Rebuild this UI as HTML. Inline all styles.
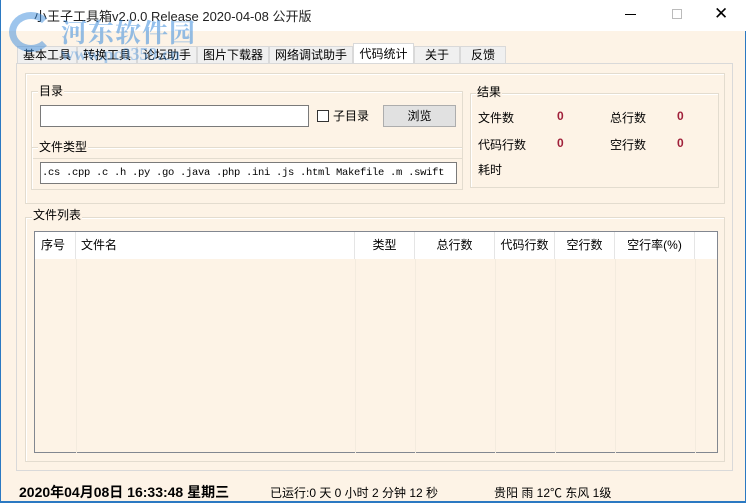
<!DOCTYPE html>
<html><head><meta charset="utf-8"><style>
*{box-sizing:border-box;margin:0;padding:0}
body{width:746px;height:503px;background:#fdf3e6;font-family:"Liberation Sans","Noto Sans CJK SC",sans-serif;font-size:12px;color:#000;position:relative;overflow:hidden;border-left:1px solid #2b79c2;border-right:1px solid #2b79c2}
.a{position:absolute}
.title{left:0;top:0;width:746px;height:31px;background:#fff}
.tab{position:absolute;top:46px;height:18px;background:#f0f0f0;border:1px solid #d9d9d9;border-bottom:none;font-size:12px;line-height:17px;text-align:center}
.grp{position:absolute;border:1px solid #e3dccf;box-shadow:inset 1px 1px 0 #fff}
.lbl{position:absolute;background:#fdf3e6;padding:0 1px;line-height:14px}
.inp{position:absolute;background:#fff;border:1px solid #7a7a7a}
.th{position:absolute;top:0;height:27px;line-height:27px;border-right:1px solid #e5e5e5}
.red{color:#a0203a;font-weight:bold}
</style></head><body>
<div class="a title"></div>
<div class="a" style="left:33px;top:6px;font-size:13px;color:#222">小王子工具箱v2.0.0 Release 2020-04-08 公开版</div>
<div class="a" style="left:624px;top:14px;width:11px;height:1px;background:#000"></div>
<div class="a" style="left:671px;top:9px;width:10px;height:10px;border:1px solid #bbb"></div>
<div class="a" style="left:713px;top:4px;font-size:17px;line-height:20px">✕</div>

<div class="tab" style="left:16px;width:60px">基本工具</div>
<div class="tab" style="left:76px;width:60px">转换工具</div>
<div class="tab" style="left:136px;width:60px">论坛助手</div>
<div class="tab" style="left:196px;width:72px">图片下载器</div>
<div class="tab" style="left:268px;width:84px">网络调试助手</div>
<div class="tab" style="left:352px;width:61px;top:43px;height:21px;background:#fff;line-height:20px">代码统计</div>
<div class="tab" style="left:413px;width:46px">关于</div>
<div class="tab" style="left:459px;width:46px">反馈</div>

<div class="a" style="left:60px;top:13px;font-size:26px;font-weight:bold;color:rgba(60,140,220,.55);font-family:'Noto Serif CJK SC',serif;letter-spacing:1px">河东软件园</div>
<div class="a" style="left:8px;top:12px;width:44px;height:40px;border-radius:50%;border:7px solid rgba(60,140,220,.5);border-right-color:transparent"></div>
<div class="a" style="left:60px;top:44px;font-size:18px;font-weight:bold;color:rgba(60,140,220,.4);font-family:'Liberation Serif',serif">www.pc0359.cn</div>

<div class="a" style="left:15px;top:63px;width:717px;height:408px;border:1px solid #d9d9d9"></div>

<div class="grp" style="left:24px;top:73px;width:700px;height:131px"></div>
<div class="grp" style="left:30px;top:91px;width:432px;height:68px"></div>
<div class="lbl" style="left:37px;top:84px">目录</div>
<div class="inp" style="left:39px;top:105px;width:269px;height:22px"></div>
<div class="a" style="left:316px;top:110px;width:12px;height:12px;border:1px solid #333;background:#fff"></div>
<div class="a" style="left:332px;top:107px">子目录</div>
<div class="a" style="left:382px;top:105px;width:73px;height:22px;background:#e1e1e1;border:1px solid #adadad;text-align:center;line-height:20px">浏览</div>

<div class="grp" style="left:30px;top:147px;width:432px;height:43px"></div>
<div class="lbl" style="left:37px;top:140px">文件类型</div>
<div class="inp" style="left:39px;top:162px;width:417px;height:22px;font-family:'Liberation Mono',monospace;font-size:10.5px;line-height:20px;padding-left:1px;letter-spacing:-0.3px;white-space:nowrap">.cs .cpp .c .h .py .go .java .php .ini .js .html Makefile .m .swift</div>

<div class="grp" style="left:469px;top:93px;width:249px;height:95px"></div>
<div class="lbl" style="left:475px;top:85px">结果</div>
<div class="a" style="left:477px;top:109px">文件数</div>
<div class="a red" style="left:556px;top:109px">0</div>
<div class="a" style="left:609px;top:109px">总行数</div>
<div class="a red" style="left:676px;top:109px">0</div>
<div class="a" style="left:477px;top:136px">代码行数</div>
<div class="a red" style="left:556px;top:136px">0</div>
<div class="a" style="left:609px;top:136px">空行数</div>
<div class="a red" style="left:676px;top:136px">0</div>
<div class="a" style="left:477px;top:161px">耗时</div>

<div class="grp" style="left:24px;top:217px;width:700px;height:245px"></div>
<div class="lbl" style="left:31px;top:208px">文件列表</div>
<div class="a" style="left:33px;top:231px;width:684px;height:222px;background:#fdf3e6;border:1px solid #828790">
 <div class="a" style="left:0;top:0;width:682px;height:27px;background:#fff"></div>
 <div class="th a" style="left:0;width:41px;padding-left:6px">序号</div>
 <div class="th a" style="left:41px;width:279px;padding-left:5px">文件名</div>
 <div class="th a" style="left:320px;width:60px;text-align:center">类型</div>
 <div class="th a" style="left:380px;width:80px;text-align:center">总行数</div>
 <div class="th a" style="left:460px;width:60px;text-align:center">代码行数</div>
 <div class="th a" style="left:520px;width:60px;text-align:center">空行数</div>
 <div class="th a" style="left:580px;width:80px;text-align:center">空行率(%)</div>
 <div class="a" style="left:41px;top:27px;width:1px;height:194px;background:#f3ebde"></div>
 <div class="a" style="left:320px;top:27px;width:1px;height:194px;background:#f3ebde"></div>
 <div class="a" style="left:380px;top:27px;width:1px;height:194px;background:#f3ebde"></div>
 <div class="a" style="left:460px;top:27px;width:1px;height:194px;background:#f3ebde"></div>
 <div class="a" style="left:520px;top:27px;width:1px;height:194px;background:#f3ebde"></div>
 <div class="a" style="left:580px;top:27px;width:1px;height:194px;background:#f3ebde"></div>
 <div class="a" style="left:660px;top:27px;width:1px;height:194px;background:#f3ebde"></div>
</div>

<div class="a" style="left:18px;top:482px;font-size:14px;font-weight:bold">2020年04月08日 16:33:48 星期三</div>
<div class="a" style="left:269px;top:484px;font-size:12px">已运行:0 天 0 小时 2 分钟 12 秒</div>
<div class="a" style="left:493px;top:484px;font-size:12px">贵阳 雨 12℃ 东风 1级</div>
<div class="a" style="left:0;top:501px;width:746px;height:2px;background:#2b79c2"></div>
</body></html>
